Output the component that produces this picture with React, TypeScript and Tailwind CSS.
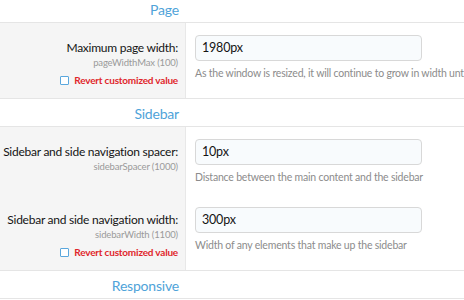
import React from "react";

type Row = {
  label: string;
  hint: string;
  value: string;
  explain: string;
  customized?: boolean;
};

const SECTIONS: { title: string; rows: Row[] }[] = [
  {
    title: "Page",
    rows: [
      {
        label: "Maximum page width:",
        hint: "pageWidthMax (100)",
        value: "1980px",
        explain:
          "As the window is resized, it will continue to grow in width until it reaches this width.",
        customized: true,
      },
    ],
  },
  {
    title: "Sidebar",
    rows: [
      {
        label: "Sidebar and side navigation spacer:",
        hint: "sidebarSpacer (1000)",
        value: "10px",
        explain: "Distance between the main content and the sidebar",
      },
      {
        label: "Sidebar and side navigation width:",
        hint: "sidebarWidth (1100)",
        value: "300px",
        explain: "Width of any elements that make up the sidebar",
        customized: true,
      },
    ],
  },
  { title: "Responsive", rows: [] },
];

function Header({ title }: { title: string }) {
  return (
    <div className="flex h-[28px] border-b border-[#e5e5e5] bg-white">
      <div className="w-[186px] shrink-0 pr-[7px] pt-[1px] text-right text-[14px] leading-[28px] tracking-[-0.2px] text-[#4fa3d9]">
        {title}
      </div>
    </div>
  );
}

function OptionRow({ row }: { row: Row }) {
  return (
    <div className="flex">
      <div className="w-[186px] shrink-0 border-r border-[#e8e8e8] bg-[#f5f5f5] pt-[17px] pb-[11px] pr-[7px] text-right">
        <div className="whitespace-nowrap text-[12px] leading-[16px] tracking-[-0.25px] text-[#141414]">
          {row.label}
        </div>
        <div className="whitespace-nowrap text-[9.5px] leading-[13px] tracking-[-0.15px] text-[#9a9a9a]">
          {row.hint}
        </div>
        {row.customized && (
          <div className="mt-[4px] flex items-center justify-end gap-[5px] text-[10px] font-bold leading-[14px] tracking-[-0.2px] text-[#e0262b]">
            <span className="h-[9px] w-[9px] rounded-[1px] border border-[#5aa7dd] bg-white" />
            <span className="whitespace-nowrap">Revert customized value</span>
          </div>
        )}
      </div>
      <div className="flex-1 pt-[12px] pb-[10px] pl-[9px]">
        <div className="flex h-[26px] w-[227px] items-center rounded-[4px] border border-[#d8d8d8] bg-[#f8fbfd] pl-[6px] text-[12.5px] tracking-[-0.2px] text-[#141414]">
          {row.value}
        </div>
        <div className="mt-[4px] whitespace-nowrap text-[10.5px] leading-[16px] tracking-[-0.2px] text-[#8c8c8c]">
          {row.explain}
        </div>
      </div>
    </div>
  );
}

export default function App() {
  return (
    <div className="h-[300px] w-[464px] overflow-hidden bg-white font-['Lato',sans-serif]">
      <div className="-mt-[5px] w-[760px]">
        {SECTIONS.map((s) => (
          <div key={s.title}>
            <Header title={s.title} />
            {s.rows.length > 0 && (
              <div className="border-b border-[#e5e5e5]">
                {s.rows.map((r) => (
                  <OptionRow key={r.hint} row={r} />
                ))}
              </div>
            )}
          </div>
        ))}
      </div>
    </div>
  );
}
